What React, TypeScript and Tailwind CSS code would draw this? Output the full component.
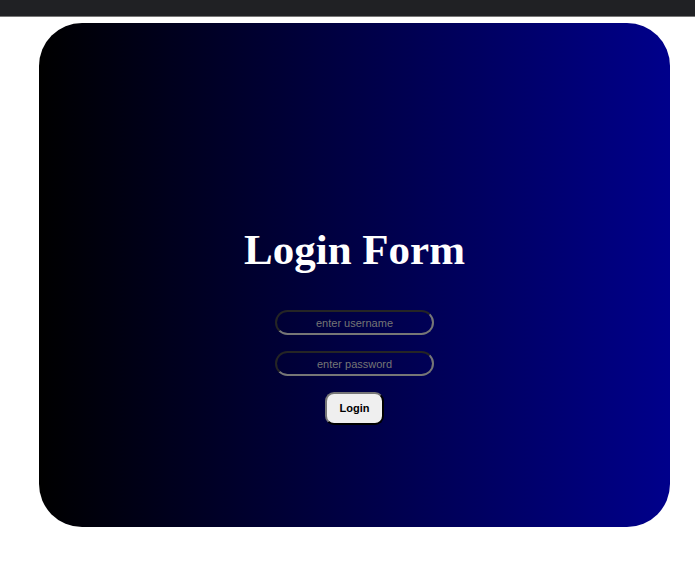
const fieldClass =
  "h-[25px] w-[159px] rounded-full border-2 border-t-[#252525] border-l-[#252525] border-r-[#767676] border-b-[#767676] bg-transparent text-center font-['Liberation_Sans',Arial,sans-serif] text-[11px] text-white placeholder:text-[#757575]";

export default function App() {
  return (
    <div className="min-h-screen bg-white">
      <header className="box-content h-4 border-b border-[#777777] bg-[#202124]" />
      <main className="pt-[6px] pr-[25px] pl-[39px]">
        <form
          className="flex h-[504px] flex-col items-center rounded-[43px] bg-[linear-gradient(to_right,#000000,#00008b)] pt-[202px]"
          onSubmit={(event) => event.preventDefault()}
        >
          <h1 className="font-['Liberation_Serif','Times_New_Roman',serif] text-[43px] leading-[50px] font-bold text-white">
            Login Form
          </h1>
          <div className="mt-[35px] flex flex-col items-center gap-4">
            <input
              type="text"
              aria-label="Username"
              placeholder="enter username"
              className={fieldClass}
            />
            <input
              type="password"
              aria-label="Password"
              placeholder="enter password"
              className={fieldClass}
            />
            <button
              type="submit"
              className="h-[33px] w-[59px] rounded-[9px] border-2 border-t-[#767676] border-r-black border-b-black border-l-[#767676] bg-[#efefef] font-['Liberation_Sans',Arial,sans-serif] text-[11px] font-bold text-black"
            >
              Login
            </button>
          </div>
        </form>
      </main>
    </div>
  );
}
